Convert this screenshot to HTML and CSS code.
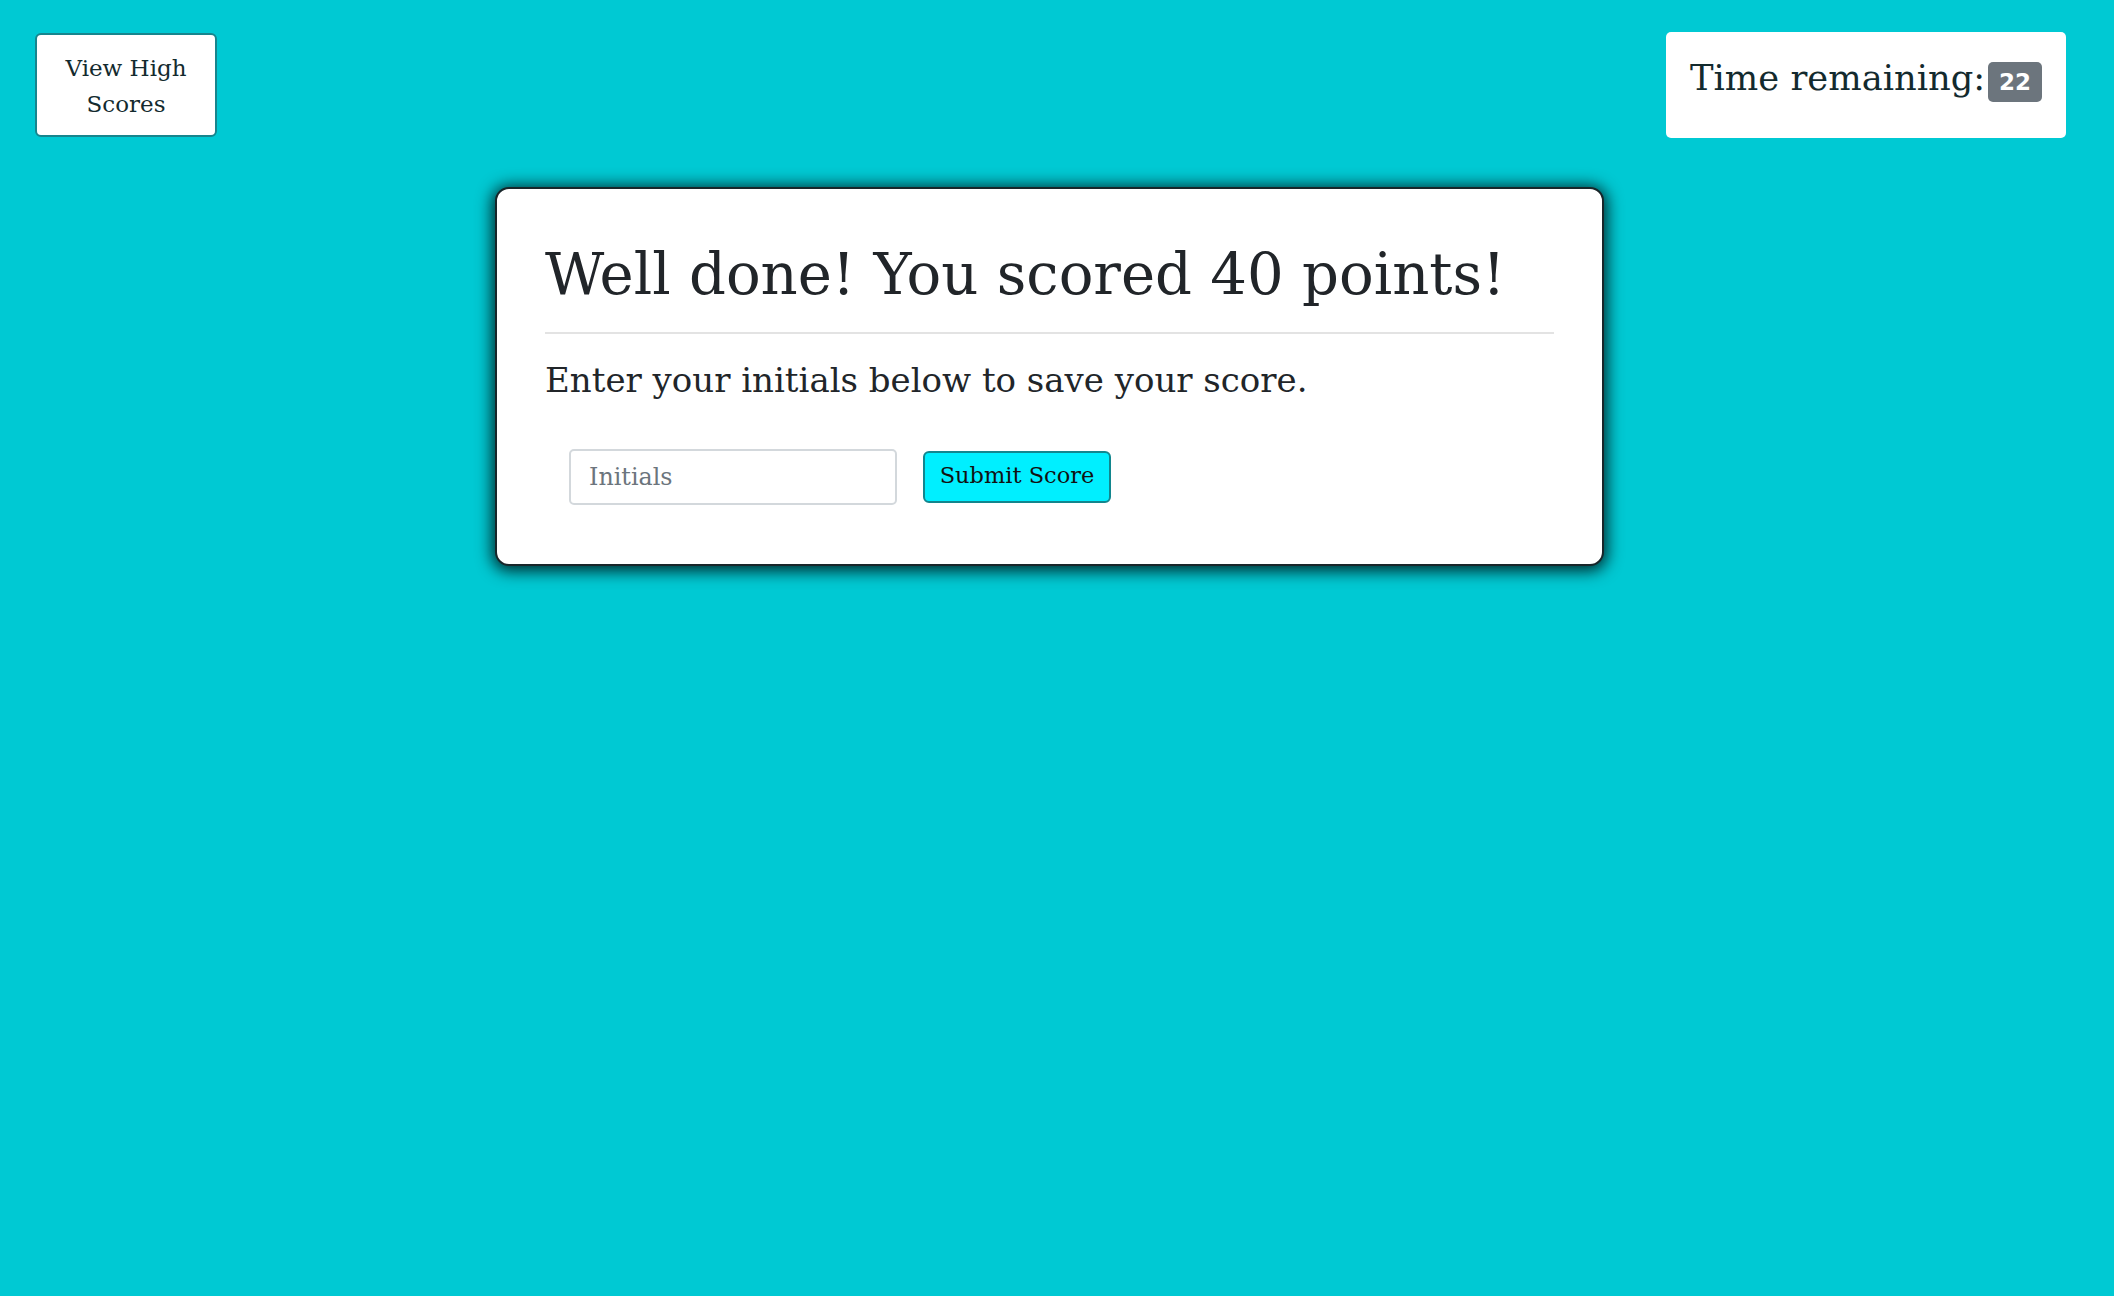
FILE: index.html
```html
<!DOCTYPE html>
<html lang="en">
<head>
<meta charset="utf-8">
<title>Code Quiz</title>
<link rel="stylesheet" href="styles.css">
</head>
<body>
<header class="topbar">
  <button class="scores-btn" type="button">View High Scores</button>
  <div class="timer">
    <h3 class="timer-label"><span>Time remaining:</span><span class="badge">22</span></h3>
  </div>
</header>
<main class="stage">
  <section class="card">
    <h1 class="title">Well done! You scored 40 points!</h1>
    <hr class="rule">
    <p class="lead">Enter your initials below to save your score.</p>
    <form class="score-form">
      <input class="initials" type="text" placeholder="Initials">
      <button class="submit-btn" type="button">Submit Score</button>
    </form>
  </section>
</main>
</body>
</html>
```
FILE: styles.css
```css
* { box-sizing: border-box; }
html, body { margin: 0; padding: 0; }
body {
  background: #00c9d3;
  font-family: "DejaVu Serif", "Liberation Serif", serif;
  color: #212529;
  min-height: 1296px;
}
.topbar {
  display: flex;
  justify-content: space-between;
  align-items: flex-start;
  padding: 32px 48px 0 35px;
}
.scores-btn {
  margin-top: 1px;
  width: 182px;
  height: 104px;
  background: #fff;
  border: 2px solid #17858d;
  border-radius: 6px;
  font-family: inherit;
  font-size: 23px;
  line-height: 36px;
  color: #132a2e;
  padding: 2px 8px 0 8px;
}
.timer {
  width: 400px;
  height: 106px;
  background: #fff;
  border-radius: 5px;
  padding: 22px 24px 0 24px;
}
.timer-label {
  margin: 0;
  font-weight: normal;
  font-size: 35.3px;
  line-height: 48px;
  color: #132a2e;
  display: flex;
  align-items: flex-start;
  white-space: nowrap;
}
.badge {
  display: inline-block;
  margin: 8px 0 0 3px;
  width: 54px;
  height: 40px;
  line-height: 40px;
  text-align: center;
  background: #6c757d;
  color: #fff;
  border-radius: 5px;
  font-family: "DejaVu Sans", sans-serif;
  font-weight: bold;
  font-size: 23px;
}
.stage {
  display: flex;
  justify-content: center;
  padding: 49px 15px 0 0;
}
.card {
  width: 1109px;
  background: #fff;
  border: 2px solid #18262a;
  border-radius: 14px;
  box-shadow: 0 2px 16px 3px rgba(0, 0, 0, 0.8);
  padding: 47px 48px 59px 48px;
}
.title {
  margin: 0;
  font-weight: normal;
  font-size: 57.7px;
  line-height: 77px;
  white-space: nowrap;
}
.rule {
  margin: 19px 0 0 0;
  border: 0;
  border-top: 2px solid #e3e3e3;
}
.lead {
  margin: 20px 0 0 0;
  font-size: 34px;
  line-height: 52px;
}
.score-form {
  display: flex;
  align-items: center;
  gap: 26px;
  margin-top: 43px;
  padding-left: 24px;
}
.initials {
  width: 328px;
  height: 56px;
  border: 2px solid #d3d8dc;
  border-radius: 5px;
  padding: 0 18px;
  font-family: inherit;
  font-size: 23.8px;
  color: #212529;
}
.initials::placeholder { color: #6c757d; }
.submit-btn {
  width: 188px;
  height: 52px;
  background: #00efff;
  border: 2px solid #12868e;
  border-radius: 6px;
  font-family: inherit;
  font-size: 22.5px;
  color: #111;
  padding: 0 0 4px 0;
}
```
